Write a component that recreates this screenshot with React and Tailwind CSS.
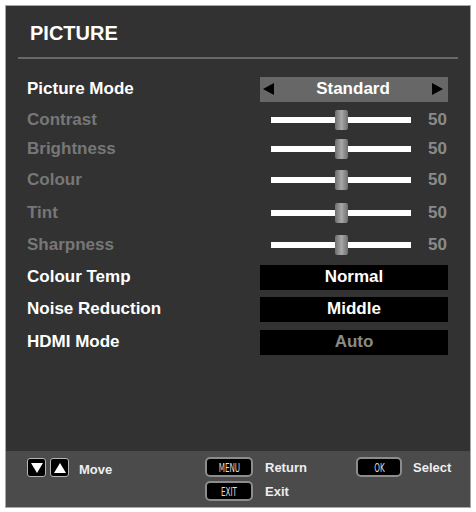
import React from "react";

const font = { fontFamily: '"Liberation Sans", Arial, sans-serif' };

const rows = [
  { label: "Picture Mode", type: "select", value: "Standard", h: "h-[32px]" },
  { label: "Contrast", type: "slider", value: 50, h: "h-[30px]", dim: true },
  { label: "Brightness", type: "slider", value: 50, h: "h-[28px]", dim: true },
  { label: "Colour", type: "slider", value: 50, h: "h-[34px]", dim: true },
  { label: "Tint", type: "slider", value: 50, h: "h-[32px]", dim: true },
  { label: "Sharpness", type: "slider", value: 50, h: "h-[32px]", dim: true },
  { label: "Colour Temp", type: "box", value: "Normal", h: "h-[32px]" },
  { label: "Noise Reduction", type: "box", value: "Middle", h: "h-[32px]" },
  { label: "HDMI Mode", type: "box", value: "Auto", h: "h-[34px]", off: true },
];

const Slider = ({ value }) => (
  <div className="flex items-center w-full pl-[11px]">
    <div className="relative w-[140px] h-[6px] bg-white">
      <div className="absolute left-[64px] -top-[7px] w-[13px] h-[20px] rounded-[2px] bg-gradient-to-r from-[#6e6e6e] via-[#a8a8a8] to-[#6e6e6e]" />
    </div>
    <span className="ml-auto mr-[1px] text-[17px] font-bold text-[#8a8a8a]">{value}</span>
  </div>
);

const Select = ({ value }) => (
  <div className="flex items-center justify-between w-full h-[25px] bg-[#676767] px-[3px]">
    <div className="w-0 h-0 border-y-[6px] border-y-transparent border-r-[11px] border-r-black" />
    <span className="text-[17px] font-bold text-white">{value}</span>
    <div className="w-0 h-0 border-y-[6px] border-y-transparent border-l-[11px] border-l-black mr-[2px]" />
  </div>
);

const Box = ({ value, off }) => (
  <div className={"flex items-center justify-center w-full h-[25px] bg-black text-[17px] font-bold " + (off ? "text-[#8a8a8a]" : "text-white")}>
    {value}
  </div>
);

const ArrowKey = ({ up }) => (
  <div className="flex items-center justify-center w-[19px] h-[19px] rounded-[3px] bg-black border border-[#b5b5b5]">
    {up ? (
      <div className="w-0 h-0 border-x-[6px] border-x-transparent border-b-[10px] border-b-white" />
    ) : (
      <div className="w-0 h-0 border-x-[6px] border-x-transparent border-t-[10px] border-t-white" />
    )}
  </div>
);

const KeyButton = ({ children, w }) => (
  <div
    className={"flex items-center justify-center h-[20px] rounded-[5px] bg-black border-2 border-[#8c8c8c] text-[10px] font-normal text-[#dddddd] " + w}
    style={{ fontFamily: '"DejaVu Sans Condensed", "Liberation Sans", sans-serif' }}
  >
    <span className="scale-x-[0.8] scale-y-[1.25]">{children}</span>
  </div>
);

export default function App() {
  return (
    <div className="w-[476px] h-[512px] bg-white pl-[5px] pr-[5px] pt-[5px] pb-[4px]" style={font}>
      <div className="flex flex-col h-full bg-[#323232] border border-[#a8a8a8]">
        <div className="pt-[15px] pl-[24px] text-[20px] leading-[24px] font-bold text-white">PICTURE</div>
        <div className="mx-[12px] mt-[12px] h-[2px] bg-[#686868]" />

        <div className="flex flex-col mt-[14px]">
          {rows.map((r) => (
            <div key={r.label} className={"flex items-center " + r.h}>
              <span className={"pl-[21px] text-[17px] font-bold " + (r.dim ? "text-[#777777]" : "text-white")}>
                {r.label}
              </span>
              <div className="ml-auto mr-[22px] w-[188px] flex items-center">
                {r.type === "select" && <Select value={r.value} />}
                {r.type === "slider" && <Slider value={r.value} />}
                {r.type === "box" && <Box value={r.value} off={r.off} />}
              </div>
            </div>
          ))}
        </div>

        <div className="flex-1" />

        <div className="h-[56px] bg-[#4b4b4b] flex pt-[6px] text-[13px] font-bold text-[#eeeeee]">
          <div className="flex items-start pl-[21px] w-[199px]">
            <div className="flex gap-[4px] mt-[1px]">
              <ArrowKey />
              <ArrowKey up />
            </div>
            <span className="ml-[10px] mt-[3px]">Move</span>
          </div>
          <div className="flex flex-col gap-[4px] w-[60px]">
            <KeyButton w="w-[48px]">MENU</KeyButton>
            <KeyButton w="w-[48px]">EXIT</KeyButton>
          </div>
          <div className="flex flex-col w-[91px] leading-[24px] -mt-[1px]">
            <span>Return</span>
            <span>Exit</span>
          </div>
          <div className="w-[57px]">
            <KeyButton w="w-[46px]">OK</KeyButton>
          </div>
          <span className="leading-[24px] -mt-[1px]">Select</span>
        </div>
      </div>
    </div>
  );
}
